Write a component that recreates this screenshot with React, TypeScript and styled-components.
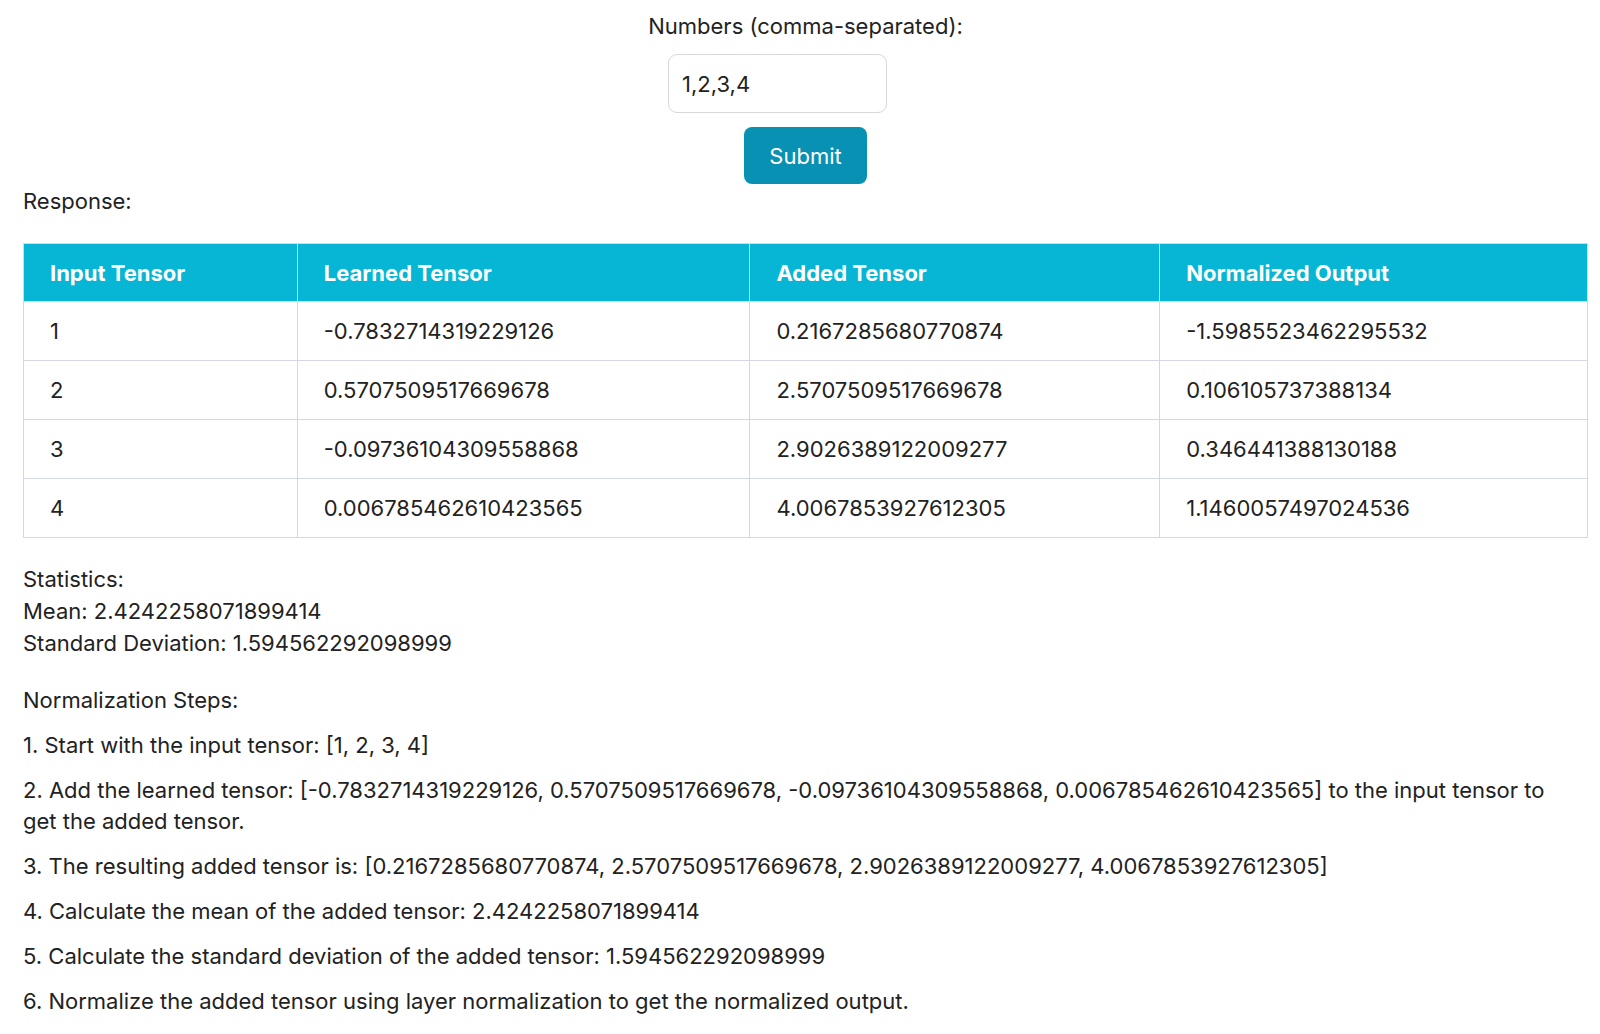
import React from "react";
import styled, { createGlobalStyle } from "styled-components";

const Global = createGlobalStyle`
  body {
    margin: 0;
    background: #ffffff;
    font-family: Inter, "Noto Sans", sans-serif;
    color: #222222;
  }
`;

const Page = styled.div`
  padding: 12px 12px 20px 23px;
`;

const Form = styled.form`
  display: flex;
  flex-direction: column;
  align-items: center;
`;

const Label = styled.label`
  font-size: 22px;
  line-height: 28px;
`;

const Input = styled.input`
  box-sizing: border-box;
  width: 219px;
  height: 59px;
  margin-top: 14px;
  margin-right: 56px;
  padding: 0 13px;
  border: 1.5px solid #d6d8dc;
  border-radius: 9px;
  font-family: inherit;
  font-size: 22px;
  color: #222;
  outline: none;
`;

const Button = styled.button`
  margin-top: 14px;
  width: 123px;
  height: 57px;
  border: none;
  border-radius: 8px;
  background: #0891b2;
  color: #ffffff;
  font-family: inherit;
  font-size: 22px;
  cursor: pointer;
`;

const Heading = styled.div`
  font-size: 22px;
  line-height: 30px;
  margin-top: 2px;
`;

const Table = styled.table`
  margin-top: 27px;
  width: 1565px;
  border-collapse: collapse;
  font-size: 22px;
`;

const Th = styled.th<{ $w: number }>`
  width: ${(p) => p.$w}px;
  height: 58px;
  box-sizing: border-box;
  background: #06b6d4;
  color: #ffffff;
  font-weight: 700;
  text-align: left;
  padding: 0 26px;
  border: 1.5px solid #d4d8e0;
`;

const Td = styled.td`
  height: 59px;
  box-sizing: border-box;
  padding: 0 26px;
  border: 1.5px solid #d4d8e0;
`;

const Stats = styled.div`
  margin-top: 25px;
  font-size: 22px;
  line-height: 32px;
`;

const Steps = styled.div`
  margin-top: 26px;
  font-size: 22px;
  line-height: 31px;
`;

const Step = styled.p`
  margin: 14px 0 0;
  width: 1560px;
`;

const rows = [
  ["1", "-0.7832714319229126", "0.2167285680770874", "-1.5985523462295532"],
  ["2", "0.5707509517669678", "2.5707509517669678", "0.106105737388134"],
  ["3", "-0.09736104309558868", "2.9026389122009277", "0.346441388130188"],
  ["4", "0.006785462610423565", "4.0067853927612305", "1.1460057497024536"],
];

const cols: [string, number][] = [
  ["Input Tensor", 274],
  ["Learned Tensor", 453],
  ["Added Tensor", 410],
  ["Normalized Output", 428],
];

export default function App() {
  return (
    <Page>
      <Global />
      <Form onSubmit={(e) => e.preventDefault()}>
        <Label htmlFor="nums">Numbers (comma-separated):</Label>
        <Input id="nums" defaultValue="1,2,3,4" />
        <Button type="submit">Submit</Button>
      </Form>
      <Heading>Response:</Heading>
      <Table>
        <thead>
          <tr>
            {cols.map(([c, w]) => (
              <Th key={c} $w={w}>
                {c}
              </Th>
            ))}
          </tr>
        </thead>
        <tbody>
          {rows.map((r) => (
            <tr key={r[0]}>
              {r.map((v, i) => (
                <Td key={i}>{v}</Td>
              ))}
            </tr>
          ))}
        </tbody>
      </Table>
      <Stats>
        <div>Statistics:</div>
        <div>Mean: 2.4242258071899414</div>
        <div>Standard Deviation: 1.594562292098999</div>
      </Stats>
      <Steps>
        <div>Normalization Steps:</div>
        <Step>1. Start with the input tensor: [1, 2, 3, 4]</Step>
        <Step>
          2. Add the learned tensor: [-0.7832714319229126, 0.5707509517669678,
          -0.09736104309558868, 0.006785462610423565] to the input tensor to get the
          added tensor.
        </Step>
        <Step>
          3. The resulting added tensor is: [0.2167285680770874, 2.5707509517669678,
          2.9026389122009277, 4.0067853927612305]
        </Step>
        <Step>4. Calculate the mean of the added tensor: 2.4242258071899414</Step>
        <Step>5. Calculate the standard deviation of the added tensor: 1.594562292098999</Step>
        <Step>6. Normalize the added tensor using layer normalization to get the normalized output.</Step>
      </Steps>
    </Page>
  );
}
